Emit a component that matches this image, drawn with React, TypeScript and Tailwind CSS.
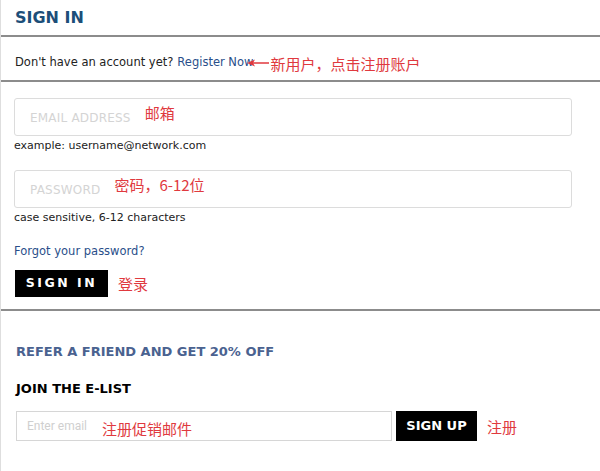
import React from 'react';

const font = { fontFamily: '"DejaVu Sans", "Noto Sans CJK SC", sans-serif' };

function Note({ children, className = '' }: { children: React.ReactNode; className?: string }) {
  return (
    <span className={`text-[#e0393e] text-[15px] leading-none font-['Noto_Sans_CJK_SC',sans-serif] ${className}`}>
      {children}
    </span>
  );
}

function Field({ placeholder, note, hint }: { placeholder: string; note: string; hint: string }) {
  return (
    <div>
      <div className="relative h-[38px] w-[558px] rounded-[3px] border border-[#dcdcdc] flex items-center px-[15px]">
        <span className="text-[12px] text-[#d4d4d4] tracking-[0.2px] uppercase mt-[1px]">{placeholder}</span>
        <Note className="ml-[14px] -mt-[10px]">{note}</Note>
      </div>
      <p className="text-[11px] text-[#222] mt-[3px] leading-[14px]">{hint}</p>
    </div>
  );
}

export default function App() {
  return (
    <div className="w-[600px] h-[471px] bg-white border-l border-[#dedede] overflow-hidden" style={font}>
      <div className="h-[37px] px-[14px] pt-[8px] border-b-2 border-[#8c8c8c]">
        <h1 className="text-[16px] font-bold text-[#1c4e79] leading-[20px]">SIGN IN</h1>
      </div>

      <div className="h-[45px] px-[14px] pt-[9px] flex items-center border-b-2 border-[#8c8c8c]">
        <span className="text-[11.5px] text-[#222]">Don't have an account yet? </span>
        <span className="text-[11.5px] text-[#2a4f8a] ml-[4px]">Register Now</span>
        <svg width="22" height="8" viewBox="0 0 22 8" className="-ml-[6px]">
          <path d="M0 4 L8 0.5 L6 4 L8 7.5 Z" fill="#e0393e" />
          <line x1="5" y1="4" x2="22" y2="4" stroke="#e0393e" strokeWidth="1.5" />
        </svg>
        <Note className="ml-[1px]">新用户，点击注册账户</Note>
      </div>

      <div className="px-[13px] pt-[16px] border-b-2 border-[#8c8c8c] h-[229px]">
        <Field placeholder="Email Address" note="邮箱" hint="example: username@network.com" />
        <div className="mt-[17px]">
          <Field placeholder="Password" note="密码，6-12位" hint="case sensitive, 6-12 characters" />
        </div>
        <p className="mt-[19px] text-[11.5px] text-[#2a4f8a] leading-[14px]">Forgot your password?</p>
        <div className="mt-[12px] flex items-center">
          <button className="ml-[1px] h-[27px] w-[93px] bg-black text-white text-[12.5px] font-bold tracking-[2.5px] flex items-center justify-center">
            SIGN IN
          </button>
          <Note className="ml-[10px]">登录</Note>
        </div>
      </div>

      <div className="px-[15px] pt-[33px]">
        <h2 className="text-[13px] font-bold text-[#4a6290] leading-[16px]">REFER A FRIEND AND GET 20% OFF</h2>
        <h3 className="mt-[21px] text-[13px] font-bold text-black leading-[16px]">JOIN THE E-LIST</h3>
        <div className="mt-[14px] flex items-center">
          <div className="h-[30px] w-[376px] border border-[#d6d6d6] flex items-center px-[10px]">
            <span className="text-[12px] text-[#cfcfcf] font-['Roboto',sans-serif]">Enter email</span>
            <Note className="ml-[15px] mt-[4px]">注册促销邮件</Note>
          </div>
          <button className="ml-[4px] h-[30px] w-[81px] bg-black text-white text-[13px] font-bold flex items-center justify-center">
            SIGN UP
          </button>
          <Note className="ml-[10px]">注册</Note>
        </div>
      </div>
    </div>
  );
}
